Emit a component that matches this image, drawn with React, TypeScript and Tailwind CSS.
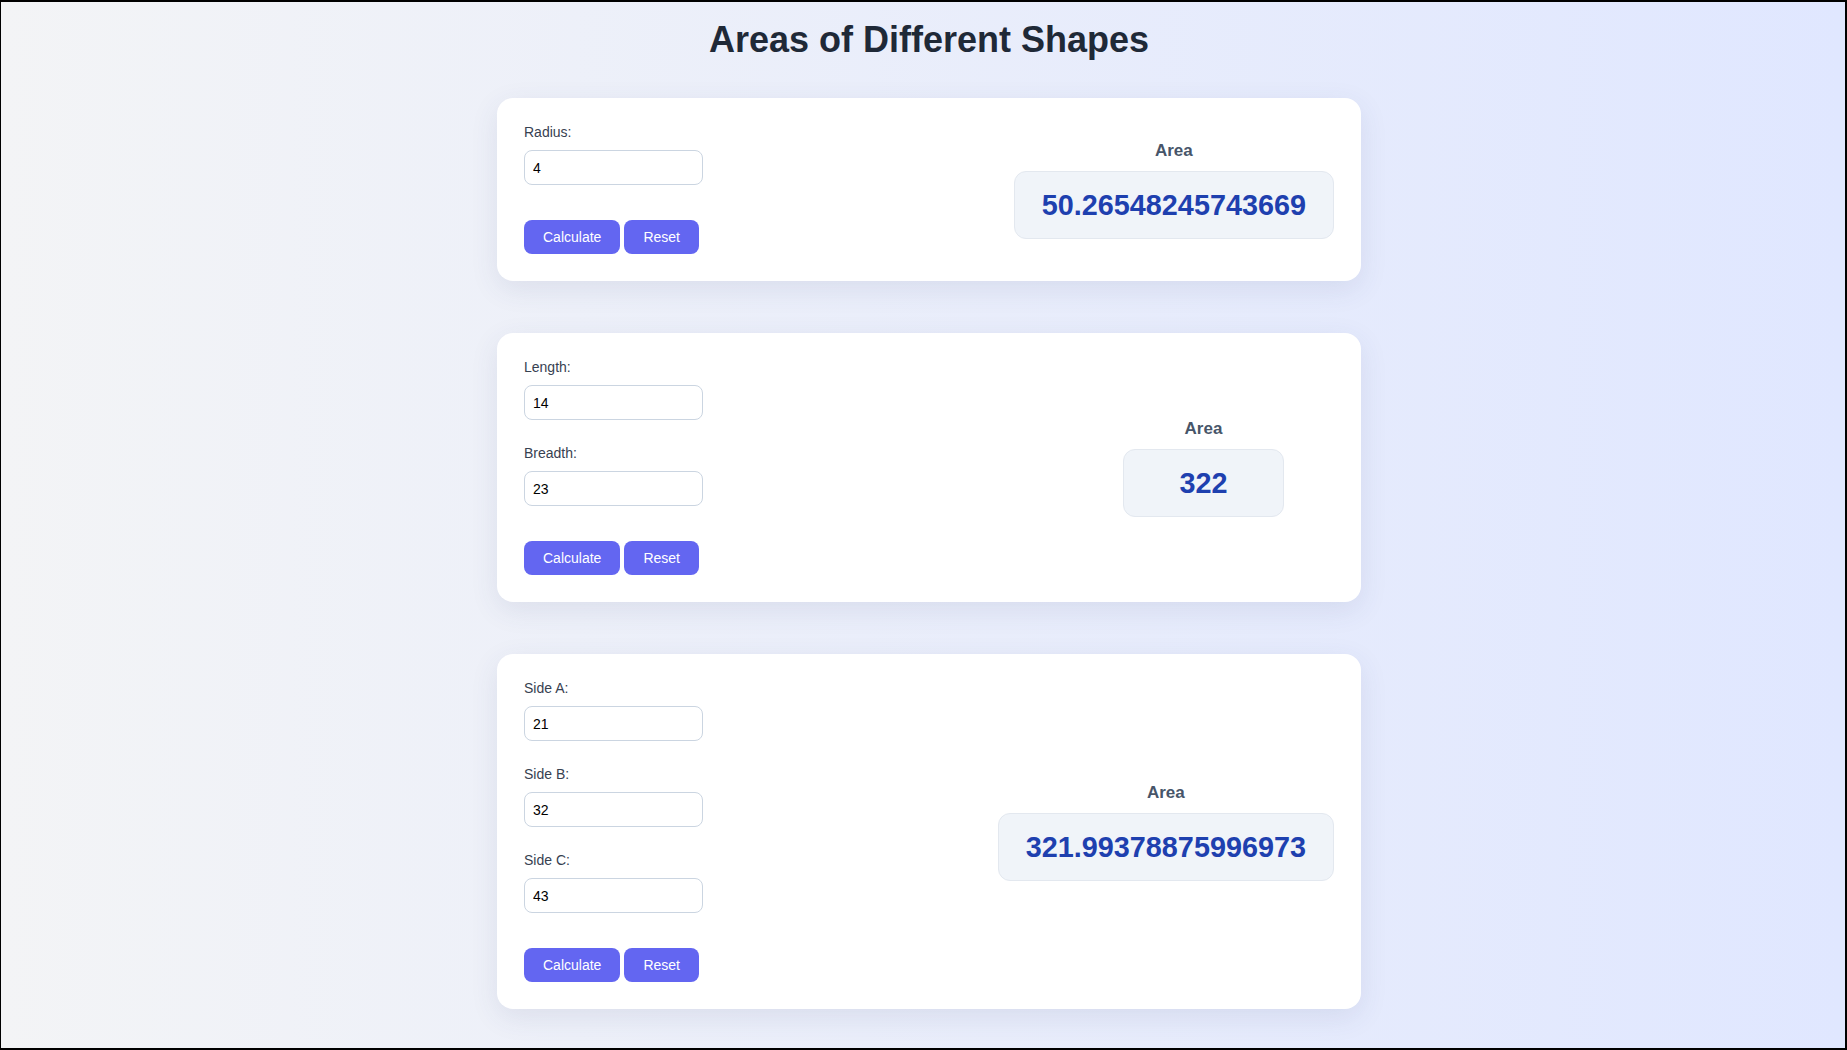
import React, { useState } from "react";

interface Field {
  key: string;
  label: string;
}

interface ShapeCardProps {
  fields: Field[];
  initial: { [key: string]: string };
  compute: (v: { [key: string]: number }) => number;
}

const ShapeCard: React.FC<ShapeCardProps> = ({ fields, initial, compute }) => {
  const [values, setValues] = useState<{ [key: string]: string }>(initial);
  const calc = (vals: { [key: string]: string }) => {
    const nums: { [key: string]: number } = {};
    fields.forEach((f) => (nums[f.key] = parseFloat(vals[f.key])));
    return String(compute(nums));
  };
  const [area, setArea] = useState<string>(calc(initial));

  const handleReset = () => {
    const empty: { [key: string]: string } = {};
    fields.forEach((f) => (empty[f.key] = ""));
    setValues(empty);
    setArea("0");
  };

  return (
    <div className="flex items-center justify-between rounded-2xl bg-white px-[27px] pt-6 pb-[27px] shadow-[0_8px_28px_rgba(55,65,120,0.10)]">
      <div className="w-[179px]">
        {fields.map((f) => (
          <div key={f.key} className="mb-[23px]">
            <label className="mb-2 block text-sm leading-5 text-[#374151]">
              {f.label}:
            </label>
            <input
              type="number"
              value={values[f.key]}
              onChange={(e) =>
                setValues({ ...values, [f.key]: e.target.value })
              }
              className="block h-[35px] w-full rounded-lg border border-[#cbd5e1] bg-white px-2 text-sm text-black outline-none [appearance:textfield] [&::-webkit-inner-spin-button]:appearance-none"
            />
          </div>
        ))}
        <div className="flex gap-1 pt-3">
          <button
            onClick={() => setArea(calc(values))}
            className="h-[34px] rounded-lg bg-[#6366f1] px-[19px] text-sm text-white"
          >
            Calculate
          </button>
          <button
            onClick={handleReset}
            className="h-[34px] rounded-lg bg-[#6366f1] px-[19px] text-sm text-white"
          >
            Reset
          </button>
        </div>
      </div>
      <div className="flex min-w-[261px] flex-col items-center">
        <div className="mb-2 text-[17px] leading-[25px] font-bold text-[#475569]">
          Area
        </div>
        <div className="min-w-[161px] rounded-xl border border-[#e3e8ef] bg-[#f0f4f9] px-[27px] py-3 text-center text-[28.8px] leading-[42px] font-bold text-[#1e40af]">
          {area}
        </div>
      </div>
    </div>
  );
};

export default function App() {
  return (
    <div className="h-screen border-t-2 border-r-2 border-b-2 border-l border-black bg-linear-to-r from-[#f3f4f6] to-[#e0e7ff] pt-[18px] pl-[12px] font-['Liberation_Sans',Arial,sans-serif]">
      <h1 className="text-center text-4xl leading-10 font-bold text-[#1f2937]">
        Areas of Different Shapes
      </h1>
      <div className="mx-auto mt-[38px] flex w-[864px] flex-col gap-[52px]">
        <ShapeCard
          fields={[{ key: "r", label: "Radius" }]}
          initial={{ r: "4" }}
          compute={(v) => Math.PI * v.r * v.r}
        />
        <ShapeCard
          fields={[
            { key: "l", label: "Length" },
            { key: "b", label: "Breadth" },
          ]}
          initial={{ l: "14", b: "23" }}
          compute={(v) => v.l * v.b}
        />
        <ShapeCard
          fields={[
            { key: "a", label: "Side A" },
            { key: "b", label: "Side B" },
            { key: "c", label: "Side C" },
          ]}
          initial={{ a: "21", b: "32", c: "43" }}
          compute={(v) => {
            const s = (v.a + v.b + v.c) / 2;
            return Math.sqrt(s * (s - v.a) * (s - v.b) * (s - v.c));
          }}
        />
      </div>
    </div>
  );
}
